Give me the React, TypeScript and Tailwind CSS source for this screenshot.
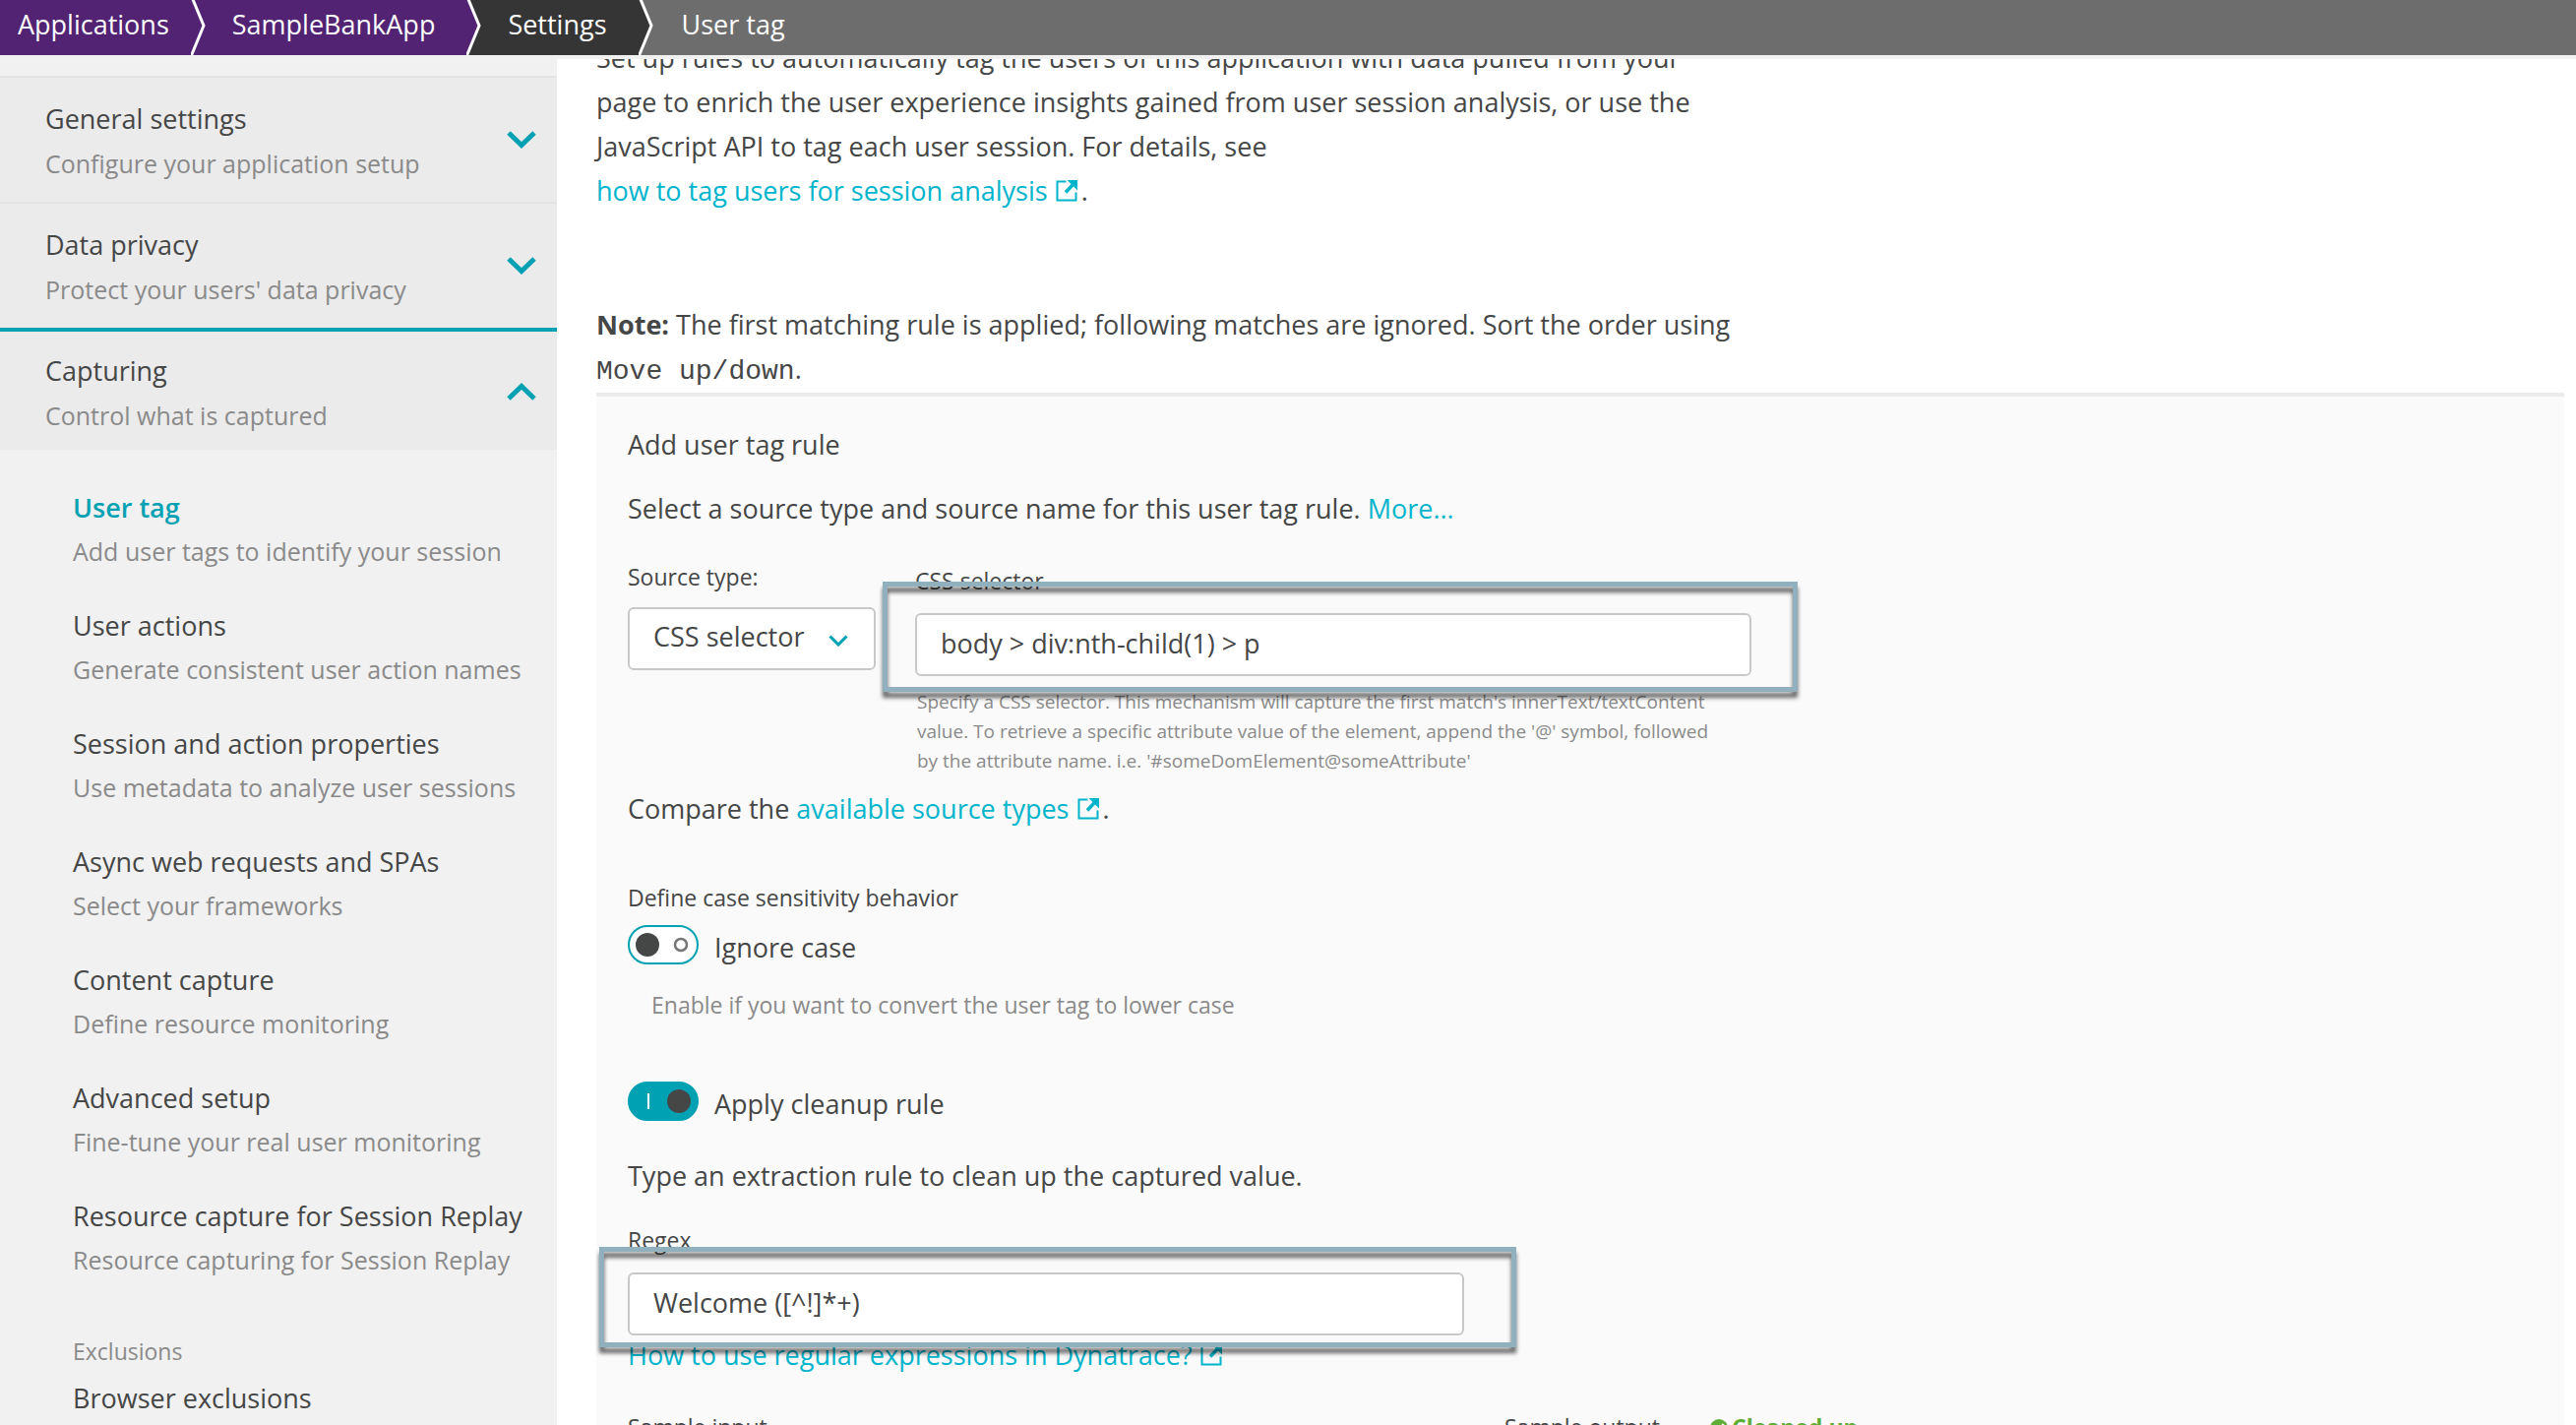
import type { ReactNode } from "react";

const titleText = "text-[27px] leading-[45px]";
const labelText = "block text-[23px] leading-[45px]";

function Chevron({ up = false }: { up?: boolean }) {
  return (
    <svg viewBox="0 0 30 18" className="mb-1 h-[18px] w-[30px] shrink-0" fill="none" stroke="#00a1b2" strokeWidth="5">
      <path d={up ? "M2 16 15 3.5 28 16" : "M2 2 15 14.5 28 2"} />
    </svg>
  );
}

function ExternalIcon() {
  return (
    <svg viewBox="0 0 22 22" className="mr-1 ml-2 inline-block size-[22px] align-[-1px]" fill="none">
      <path d="M10.500 1.500H1.500v19h19V12.500" stroke="currentColor" strokeWidth="2" />
      <path d="M10 12.500 17 5" stroke="currentColor" strokeWidth="3.5" />
      <path d="M11.500 0H22v10.500z" fill="currentColor" />
    </svg>
  );
}

function Link({ children, external = false }: { children: ReactNode; external?: boolean }) {
  return (
    <a href="#" className="text-[#00b4cc]">
      {children}
      {external && <ExternalIcon />}
    </a>
  );
}

function CrumbArrow({ from, to }: { from: string; to: string }) {
  return (
    <svg viewBox="0 0 16 56" className="h-14 w-4 shrink-0">
      <rect width="16" height="56" fill={to} />
      <path d="M0 0H1L13 26 0 56z" fill={from} />
      <path d="M1-3 13 26-1 60" fill="none" stroke="#fff" strokeWidth="3" />
    </svg>
  );
}

function Breadcrumbs() {
  return (
    <header className="relative z-10 shrink-0 border-b-4 border-[#f0f0f0]">
      <nav aria-label="Breadcrumb" className="flex h-14 bg-[#6d6d6d] text-[27px] leading-[50px] text-white">
        <a href="#" className="bg-[#522273] pr-[22px] pl-[18px]">Applications</a>
        <CrumbArrow from="#522273" to="#522273" />
        <a href="#" className="bg-[#522273] pr-8 pl-[26px]">SampleBankApp</a>
        <CrumbArrow from="#522273" to="#353535" />
        <a href="#" className="bg-[#353535] pr-8 pl-[26px]">Settings</a>
        <CrumbArrow from="#353535" to="#6d6d6d" />
        <span aria-current="page" className="pl-7">User tag</span>
      </nav>
    </header>
  );
}

function Section({ title, subtitle, open = false }: { title: string; subtitle: string; open?: boolean }) {
  return (
    <button
      type="button"
      aria-expanded={open}
      className={
        open
          ? "flex w-full items-center justify-between border-t-4 border-[#00a1b2] bg-[#ebebeb] pt-[17px] pr-[21px] pb-3 pl-[46px] text-left"
          : "flex w-full items-center justify-between border-t-2 border-[#e4e4e4] bg-[#ebebeb] pt-[19px] pr-[21px] pb-4 pl-[46px] text-left"
      }
    >
      <span>
        <span className="block text-[27px] leading-[45px]">{title}</span>
        <span className="block text-[25px] leading-[46px] text-[#8a8a8a]">{subtitle}</span>
      </span>
      <Chevron up={open} />
    </button>
  );
}

const items = [
  ["User tag", "Add user tags to identify your session"],
  ["User actions", "Generate consistent user action names"],
  ["Session and action properties", "Use metadata to analyze user sessions"],
  ["Async web requests and SPAs", "Select your frameworks"],
  ["Content capture", "Define resource monitoring"],
  ["Advanced setup", "Fine-tune your real user monitoring"],
  ["Resource capture for Session Replay", "Resource capturing for Session Replay"],
];

function Sidebar() {
  return (
    <aside className="w-[566px] shrink-0 overflow-hidden bg-[#f1f1f1] pt-[17px]">
      <Section title="General settings" subtitle="Configure your application setup" />
      <Section title="Data privacy" subtitle="Protect your users' data privacy" />
      <Section title="Capturing" subtitle="Control what is captured" open />
      <nav aria-label="Capturing" className="flex flex-col gap-[30px] pt-9 pl-[74px] whitespace-nowrap">
        {items.map(([title, subtitle], i) => (
          <a key={title} href="#" aria-current={i === 0 ? "page" : undefined}>
            <span className={i === 0 ? "block text-[27px] leading-[45px] font-semibold text-[#00a1b2]" : "block text-[27px] leading-[45px]"}>
              {title}
            </span>
            <span className="block text-[25px] leading-[45px] text-[#8a8a8a]">{subtitle}</span>
          </a>
        ))}
      </nav>
      <div className="pt-[45px] pl-[74px]">
        <p className="text-[23px] leading-[50px] text-[#8a8a8a]">Exclusions</p>
        <a href="#" className="block text-[27px] leading-[46px]">Browser exclusions</a>
      </div>
    </aside>
  );
}

function Toggle({ id, label, on = false }: { id: string; label: string; on?: boolean }) {
  return (
    <div className="flex items-start gap-4">
      <span className="relative block h-10 w-[72px]">
        <input
          id={id}
          type="checkbox"
          role="switch"
          defaultChecked={on}
          className="peer block h-10 w-[72px] appearance-none rounded-full border-2 border-[#00a1b2] bg-white checked:bg-[#00a1b2]"
        />
        <svg viewBox="0 0 72 40" className="pointer-events-none absolute inset-0 peer-checked:hidden">
          <circle cx="20" cy="20" r="12" fill="#454646" />
          <circle cx="54" cy="20" r="6" fill="none" stroke="#757575" strokeWidth="2.5" />
        </svg>
        <svg viewBox="0 0 72 40" className="pointer-events-none absolute inset-0 hidden peer-checked:block">
          <rect x="20" y="12" width="2" height="16" fill="#fff" />
          <circle cx="52" cy="20" r="12" fill="#454646" />
        </svg>
      </span>
      <label htmlFor={id} className={titleText}>{label}</label>
    </div>
  );
}

const field = "block h-16 w-full rounded-md border-2 border-[#c8c8c8] bg-white px-6 pb-1 text-[27px]";
const highlight = "pointer-events-none absolute border-5 border-[#91b0be] drop-shadow-[0_6px_2px_rgba(0,0,0,0.6)]";

function RulePanel() {
  return (
    <section className="mt-0.5 mr-3 border-t-4 border-[#ebebeb] bg-[#fafafa] pt-[26px] pl-8">
      <h2 className={titleText}>Add user tag rule</h2>
      <p className="mt-5 text-[27px] leading-[45px]">
        Select a source type and source name for this user tag rule. <Link>More...</Link>
      </p>

      <div className="mt-[25px] flex items-start gap-10">
        <div className="w-[252px] shrink-0">
          <label htmlFor="source-type" className={labelText}>Source type:</label>
          <div className="relative mt-2">
            <select id="source-type" className="block h-16 w-full appearance-none rounded-md border-2 border-[#c8c8c8] bg-white pr-14 pb-1 pl-6 text-[27px]">
              <option>CSS selector</option>
            </select>
            <svg viewBox="0 0 20 12" className="pointer-events-none absolute top-7 right-7 h-3 w-5" fill="none" stroke="#00a1b2" strokeWidth="3">
              <path d="M1.500 1.500 10 10l8.500-8.500" />
            </svg>
          </div>
        </div>
        <div className="w-full max-w-[850px] pt-1">
          <label htmlFor="css-selector" className={labelText}>CSS selector</label>
          <div className="relative mt-2.5">
            <input id="css-selector" type="text" defaultValue="body > div:nth-child(1) > p" className={field} />
            <div className={`${highlight} -top-8 -right-[47px] -bottom-4 -left-[33px]`} />
          </div>
          <p className="mt-[11px] max-w-[830px] pl-0.5 text-[19px] leading-[30px] text-[#8a8a8a]">
            Specify a CSS selector. This mechanism will capture the first match's innerText/textContent value. To retrieve
            a specific attribute value of the element, append the '@' symbol, followed by the attribute name. i.e.
            '#someDomElement@someAttribute'
          </p>
        </div>
      </div>

      <p className="mt-[11px] text-[27px] leading-[45px]">
        Compare the <Link external>available source types</Link>.
      </p>

      <p className="mt-[46px] text-[23px] leading-[45px]">Define case sensitivity behavior</p>
      <div className="mt-[5px]">
        <Toggle id="ignore-case" label="Ignore case" />
      </div>
      <p className="mt-3.5 ml-6 text-[23px] leading-[45px] text-[#8a8a8a]">
        Enable if you want to convert the user tag to lower case
      </p>
      <div className="mt-[55px]">
        <Toggle id="cleanup" label="Apply cleanup rule" on />
      </div>
      <p className="mt-7 text-[27px] leading-[45px]">Type an extraction rule to clean up the captured value.</p>

      <div className="mt-[21px] max-w-[850px]">
        <label htmlFor="regex" className={labelText}>Regex</label>
        <div className="relative mt-2.5">
          <input id="regex" type="text" defaultValue="Welcome ([^!]*+)" className={field} />
          <div className={`${highlight} -top-[26px] -right-[53px] -bottom-3 -left-[29px]`} />
        </div>
        <p className="text-[27px] leading-10">
          <Link external>How to use regular expressions in Dynatrace?</Link>
        </p>
      </div>

      <div className="mt-[31px] flex gap-[41px] text-[23px] leading-[45px]">
        <span className="w-full max-w-[850px]">Sample input</span>
        <span className="w-[168px] shrink-0">Sample output</span>
        <span className="flex items-center gap-1 font-bold whitespace-nowrap text-[#5ead35]">
          <svg viewBox="0 0 18 18" className="size-[18px]">
            <circle cx="9" cy="9" r="9" fill="currentColor" />
            <path d="M4.500 10 8 13l5.500-8" fill="none" stroke="#fff" strokeWidth="2.5" />
          </svg>
          Cleaned up
        </span>
      </div>
    </section>
  );
}

export default function App() {
  return (
    <div className="flex h-screen flex-col overflow-hidden bg-white font-['Open_Sans',sans-serif] text-[#454646]">
      <Breadcrumbs />
      <div className="flex min-h-0 flex-1">
        <Sidebar />
        <main className="-mt-6 min-w-0 flex-1 overflow-hidden pl-10">
          <p className="max-w-[1180px] text-[27px] leading-[45px]">
            Set up rules to automatically tag the users of this application with data pulled from your
            <br />
            page to enrich the user experience insights gained from user session analysis, or use the
            <br />
            JavaScript API to tag each user session. For details, see
            <br />
            <Link external>how to tag users for session analysis</Link>.
          </p>
          <p className="mt-[91px] text-[27px] leading-[45px]">
            <strong>Note:</strong> The first matching rule is applied; following matches are ignored. Sort the order
            using
            <br />
            <code className="font-['Liberation_Mono',monospace] text-[28px] leading-5">Move up/down</code>.
          </p>
          <RulePanel />
        </main>
      </div>
    </div>
  );
}
